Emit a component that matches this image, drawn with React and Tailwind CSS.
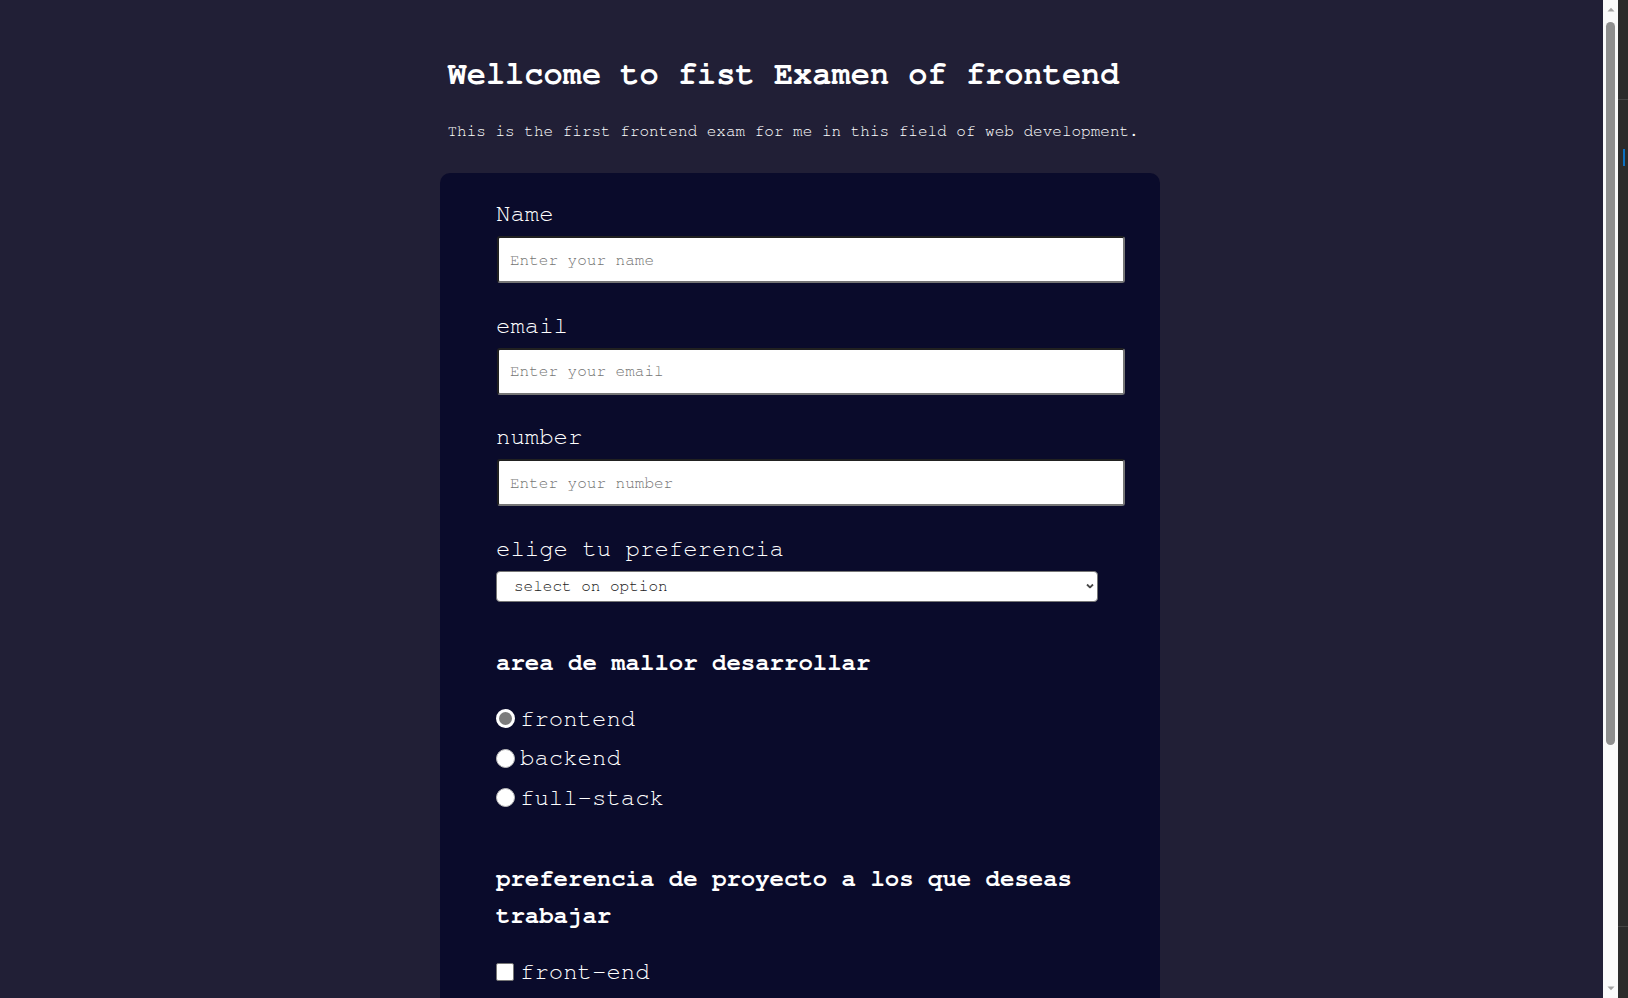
import React from "react";

const Field = ({ label, type, placeholder }) => (
  <div className="mb-[26.5px]">
    <label className="block text-[24px] leading-[32px]">{label}</label>
    <input
      type={type}
      placeholder={placeholder}
      className="mt-[6px] ml-px block w-[628px] h-[47px] bg-white text-black text-[16px] pl-[11px] rounded-[3px] border-2 border-[#767676] [border-style:inset] placeholder:text-[#757575] outline-none"
    />
  </div>
);

const Radio = ({ label, checked }) => (
  <label className="flex items-center h-[39.3px] text-[24px]">
    <input
      type="radio"
      name="area"
      defaultChecked={checked}
      className="appearance-none shrink-0 w-[19px] h-[19px] rounded-full bg-white border border-[#bdbdbd] checked:border-[3px] checked:border-white checked:bg-[#7c7c7c]"
    />
    <span className="ml-[5px]">{label}</span>
  </label>
);

const Check = ({ label }) => (
  <label className="flex items-center h-[39.3px] text-[24px]">
    <input
      type="checkbox"
      className="appearance-none shrink-0 w-[18px] h-[18px] rounded-[2px] bg-white border border-[#767676]"
    />
    <span className="ml-[6px]">{label}</span>
  </label>
);

export default function App() {
  return (
    <div className="flex h-[998px] w-full overflow-hidden font-['Nimbus_Mono_PS','FreeMono','Liberation_Mono','Courier_New',monospace]">
      {/* page */}
      <div className="flex-1 overflow-hidden bg-[#211f36]">
        <div className="w-[723px] mx-auto pt-[54px] pb-[200px]">
          <h1 className="pl-[7.5px] text-[32px] leading-[40px] font-bold text-white">
            Wellcome to fist Examen of frontend
          </h1>
          <p className="mt-[25px] pl-[7.5px] text-[16px] leading-[24px] text-white">
            This is the first frontend exam for me in this field of web development.
          </p>

          <form className="mt-[30px] w-[720px] rounded-[10px] bg-[#0a0b2b] pl-[56px] pt-[25px] pb-[160px] text-white">
            <Field label="Name" type="text" placeholder="Enter your name" />
            <Field label="email" type="email" placeholder="Enter your email" />
            <Field label="number" type="tel" placeholder="Enter your number" />

            <label className="block text-[24px] leading-[32px]">elige tu preferencia</label>
            <div className="relative mt-[6px] w-[602px]">
              <select className="block w-full h-[31px] appearance-none bg-white text-[#1a1a1a] text-[16px] pl-[17px] rounded-[4px] border border-[#767676] outline-none">
                <option>select on option</option>
                <option>frontend</option>
                <option>backend</option>
              </select>
              <svg
                width="8"
                height="5"
                viewBox="0 0 8 5"
                className="absolute right-[4px] top-1/2 -translate-y-1/2 pointer-events-none"
              >
                <path d="M1 1l3 3 3-3" stroke="#4a4a4a" strokeWidth="1.8" fill="none" />
              </svg>
            </div>

            <h3 className="mt-[45.5px] text-[24px] leading-[32px] font-bold">area de mallor desarrollar</h3>
            <div className="mt-[20.3px]">
              <Radio label="frontend" checked />
              <Radio label="backend" />
              <Radio label="full-stack" />
            </div>

            <h3 className="mt-[44.3px] w-[628px] text-[24px] leading-[36.5px] font-bold">
              preferencia de proyecto a los que deseas trabajar
            </h3>
            <div className="mt-[18.3px]">
              <Check label="front-end" />
            </div>
          </form>
        </div>
      </div>

      {/* scrollbar */}
      <div className="w-[15px] shrink-0 bg-[#fafafa] flex flex-col items-center">
        <div className="h-[19px] flex items-center justify-center">
          <svg width="8" height="5" viewBox="0 0 8 5">
            <path d="M0.5 4.5L4 0.8L7.5 4.5Z" fill="#a3a3a3" />
          </svg>
        </div>
        <div className="mt-[3px] w-[9px] h-[723px] rounded-full bg-[#8e8e8e]" />
        <div className="flex-1" />
        <div className="h-[19px] flex items-center justify-center">
          <svg width="8" height="5" viewBox="0 0 8 5">
            <path d="M0.5 0.5L4 4.2L7.5 0.5Z" fill="#a3a3a3" />
          </svg>
        </div>
      </div>

      {/* editor edge */}
      <div className="w-[10px] shrink-0 bg-[#2b2b2b] flex flex-col">
        <div className="h-[99px]" />
        <div className="h-px bg-[#444444]" />
        <div className="h-[49px]" />
        <div className="ml-[5px] w-[2px] h-[17px] bg-[#0e70c0]" />
        <div className="h-[760px]" />
        <div className="h-px bg-[#444444]" />
      </div>
    </div>
  );
}
